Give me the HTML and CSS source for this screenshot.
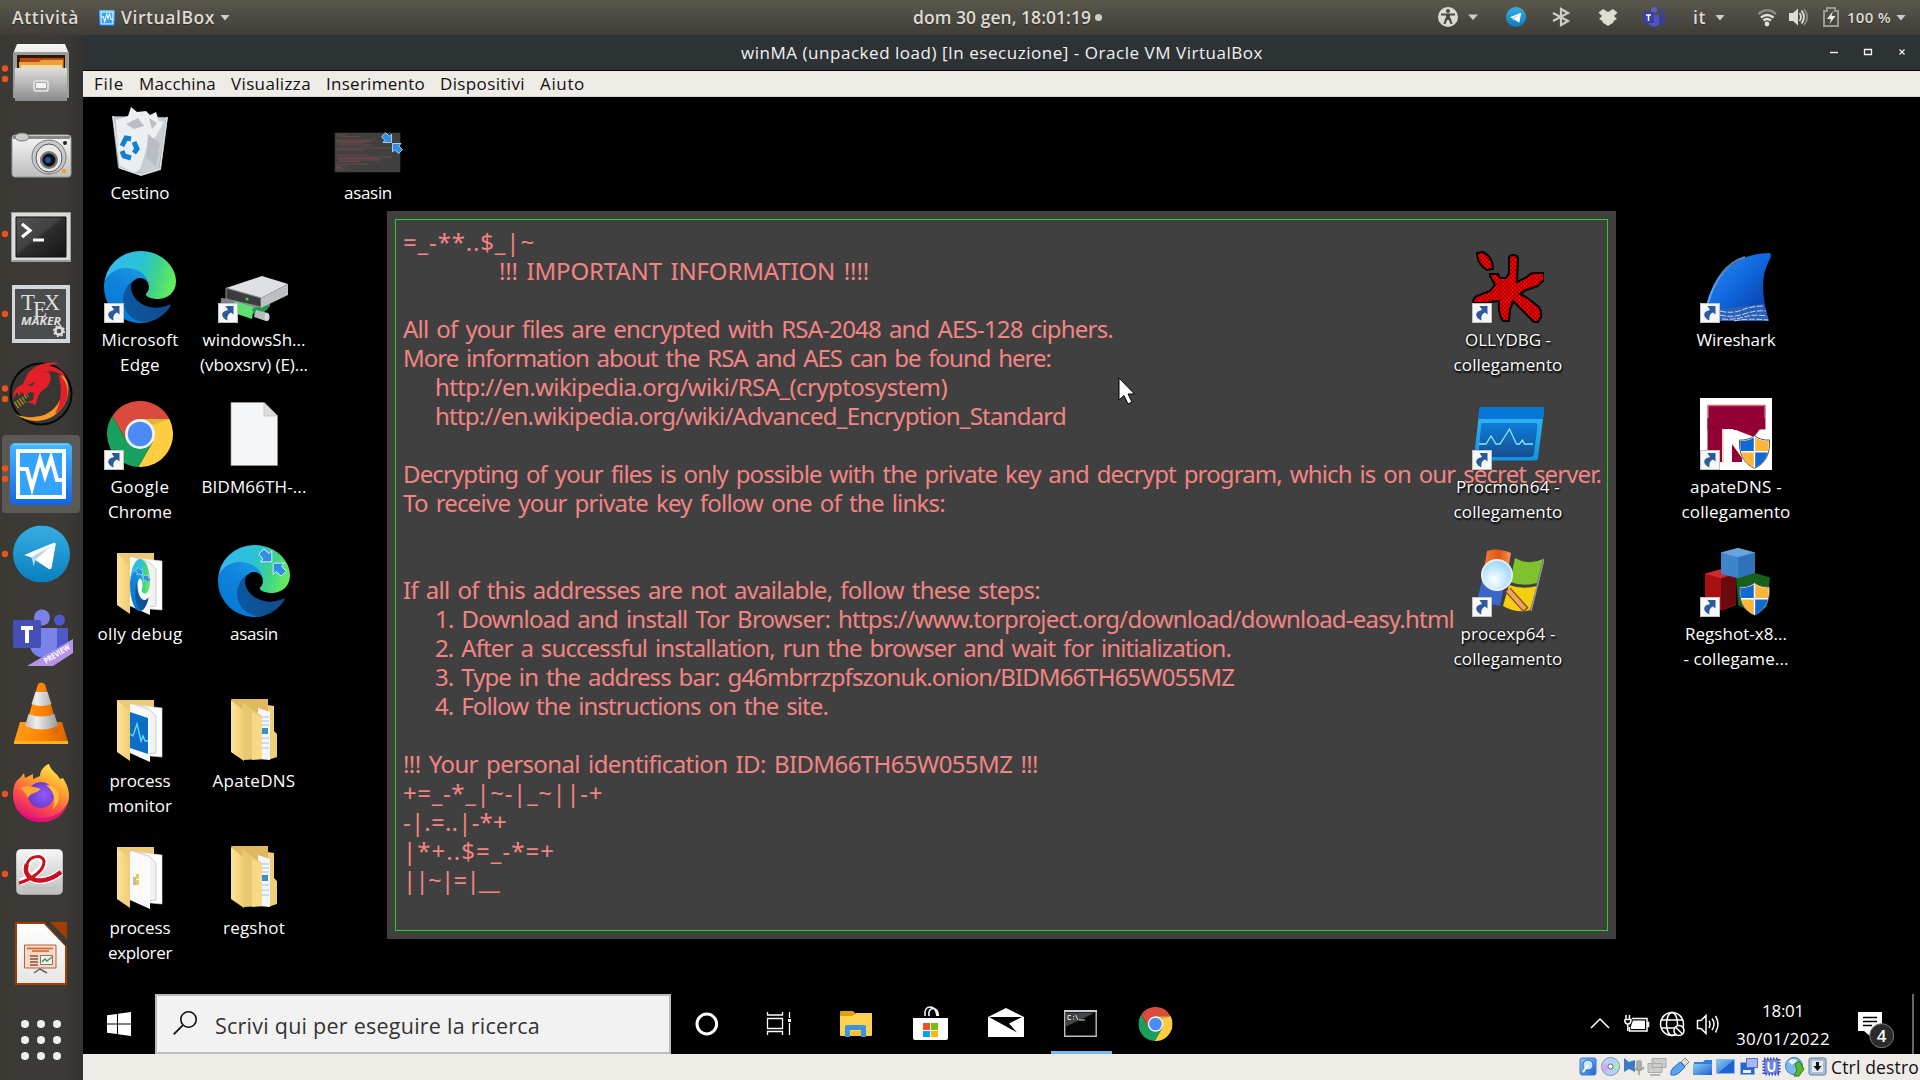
FILE: index.html
```html
<!DOCTYPE html>
<html lang="it">
<head>
<meta charset="utf-8">
<title>winMA (unpacked load) [In esecuzione] - Oracle VM VirtualBox</title>
<link rel="stylesheet" href="styles.css">
</head>
<body>
<svg class="defs" aria-hidden="true">
  <defs>
    <linearGradient id="edgeDark" x1="0" x2="1" y1="0" y2="0"><stop offset="0" stop-color="#0c59a4"/><stop offset="1" stop-color="#114a8b"/></linearGradient>
    <linearGradient id="edgeMid" x1=".8" x2=".2" y1="0" y2="1"><stop offset="0" stop-color="#1b9de2"/><stop offset=".4" stop-color="#1184dc"/><stop offset="1" stop-color="#0078d4"/></linearGradient>
    <linearGradient id="edgeTop" x1="0" x2="1" y1=".3" y2=".5"><stop offset="0" stop-color="#35b8f6"/><stop offset=".5" stop-color="#2bc3d2"/><stop offset=".75" stop-color="#40d489"/><stop offset="1" stop-color="#66eb5c"/></linearGradient>
    <linearGradient id="tg" x1="0" x2="0" y1="0" y2="1"><stop offset="0" stop-color="#37aee2"/><stop offset="1" stop-color="#087fbe"/></linearGradient>
    <linearGradient id="grey" x1="0" x2="0" y1="0" y2="1"><stop offset="0" stop-color="#dedede"/><stop offset="1" stop-color="#8b8b8b"/></linearGradient>
    <linearGradient id="silver" x1="0" x2="0" y1="0" y2="1"><stop offset="0" stop-color="#f7f7f7"/><stop offset="1" stop-color="#bdbdbd"/></linearGradient>
    <linearGradient id="term" x1="0" x2="1" y1="0" y2="1"><stop offset="0" stop-color="#555"/><stop offset=".45" stop-color="#414141"/><stop offset=".5" stop-color="#2d2d2d"/><stop offset="1" stop-color="#151515"/></linearGradient>
    <linearGradient id="vb" x1="0" x2="0" y1="0" y2="1"><stop offset="0" stop-color="#45b9ff"/><stop offset="1" stop-color="#1565e0"/></linearGradient>
    <linearGradient id="fold" x1="0" x2="1" y1="0" y2="0"><stop offset="0" stop-color="#fde39a"/><stop offset="1" stop-color="#f0cc72"/></linearGradient>
    <linearGradient id="cone" x1="0" x2="1" y1="0" y2="0"><stop offset="0" stop-color="#ff9c1a"/><stop offset=".5" stop-color="#ff8300"/><stop offset="1" stop-color="#d96400"/></linearGradient>
    <linearGradient id="coneW" x1="0" x2="1" y1="0" y2="0"><stop offset="0" stop-color="#bbb"/><stop offset=".35" stop-color="#eee"/><stop offset="1" stop-color="#999"/></linearGradient>
    <linearGradient id="ffx" x1=".8" x2=".3" y1="0" y2="1"><stop offset="0" stop-color="#fff44f"/><stop offset=".35" stop-color="#ffa32e"/><stop offset=".65" stop-color="#ff5447"/><stop offset="1" stop-color="#e00b7c"/></linearGradient>
    <radialGradient id="ffp" cx=".6" cy=".5" r=".6"><stop offset="0" stop-color="#9059ff"/><stop offset="1" stop-color="#6a38c8"/></radialGradient>
    <linearGradient id="fin" x1="0" x2="1" y1="0" y2="1"><stop offset="0" stop-color="#2f8df2"/><stop offset=".5" stop-color="#0f66dd"/><stop offset="1" stop-color="#0a2f9a"/></linearGradient>
    <linearGradient id="pmScreen" x1="0" x2="0" y1="0" y2="1"><stop offset="0" stop-color="#0f7ddb"/><stop offset="1" stop-color="#174f90"/></linearGradient>
    <linearGradient id="pmBody" x1="0" x2="0" y1="0" y2="1"><stop offset="0" stop-color="#35baf0"/><stop offset="1" stop-color="#1193e6"/></linearGradient>
    <radialGradient id="lens" cx=".4" cy=".65" r=".7"><stop offset="0" stop-color="#fff"/><stop offset="1" stop-color="#8fd3fa"/></radialGradient>
    <linearGradient id="flagRed" x1="0" x2="1" y1="0" y2="0"><stop offset="0" stop-color="#f5823a"/><stop offset=".6" stop-color="#de5512"/><stop offset="1" stop-color="#f29a5e"/></linearGradient>
    <linearGradient id="impr" x1="0" x2="0" y1="0" y2="1"><stop offset="0" stop-color="#fff"/><stop offset="1" stop-color="#e6e6e6"/></linearGradient>
    <linearGradient id="blueBox" x1="0" x2="1" y1="0" y2="1"><stop offset="0" stop-color="#8cc9f7"/><stop offset="1" stop-color="#1b62cf"/></linearGradient>
    <pattern id="check" width="4" height="4" patternUnits="userSpaceOnUse"><rect width="4" height="4" fill="#f40000"/><path d="M0 0h2v2H0zM2 2h2v2H2z" fill="#a80000"/></pattern>

    <symbol id="edge" viewBox="0 0 256 256"><g transform="translate(-4.63 -4.92)">
      <path fill="url(#edgeDark)" d="M235.68 195.46a93.73 93.73 0 0 1-10.54 4.71 101.87 101.87 0 0 1-35.9 6.46c-47.32 0-88.54-32.55-88.54-74.32A31.48 31.48 0 0 1 117.13 105c-42.8 1.8-53.8 46.4-53.8 72.53 0 73.88 68.09 81.37 82.76 81.37 7.91 0 19.84-2.3 27-4.56l1.31-.44a128.34 128.34 0 0 0 66.6-52.8 4 4 0 0 0-5.32-5.64z"/>
      <path fill="url(#edgeMid)" d="M110.34 246.34A79.2 79.2 0 0 1 87.6 225a80.72 80.72 0 0 1 29.53-120c3.12-1.47 8.45-4.13 15.54-4a32.35 32.35 0 0 1 25.69 13 31.88 31.88 0 0 1 6.36 18.66c0-.21 24.46-79.6-80-79.6-43.9 0-80 41.66-80 78.21a130.15 130.15 0 0 0 12.11 56 128 128 0 0 0 156.38 67.11 75.55 75.55 0 0 1-62.78-8z"/>
      <path fill="url(#edgeTop)" d="M156.94 153.78c-.81 1.05-3.3 2.5-3.3 5.66 0 2.61 1.7 5.12 4.72 7.23 14.38 10 41.49 8.68 41.56 8.68a59.56 59.56 0 0 0 30.27-8.35 61.38 61.38 0 0 0 30.43-52.88c.26-22.41-8-37.31-11.34-43.91C228.09 28.76 182.35 4.92 132.61 4.92a128 128 0 0 0-128 126.2c.48-36.54 36.8-66.05 80-66.05 3.5 0 23.46.34 42 10.07 16.34 8.58 24.9 18.94 30.85 29.21 6.18 10.67 7.28 24.15 7.28 29.52s-2.74 13.33-7.8 19.91z"/></g>
    </symbol>
    <symbol id="chrome" viewBox="3 3 66 66">
      <path fill="#db4a3e" d="M65.4 21A33 33 0 0 0 8.3 18L23 43.5 36 36V21z"/>
      <path fill="#ffcd42" transform="rotate(120 36 36)" d="M65.4 21A33 33 0 0 0 8.3 18L23 43.5 36 36V21z"/>
      <path fill="#17a05e" transform="rotate(240 36 36)" d="M65.4 21A33 33 0 0 0 8.3 18L23 43.5 36 36V21z"/>
      <path fill="#000" opacity=".12" d="M36 21h29.4L48 27z"/>
      <circle cx="36" cy="36" r="15" fill="#f1f1f1"/><circle cx="36" cy="36" r="12.2" fill="#4b8bf5"/>
    </symbol>
    <symbol id="shortcut" viewBox="0 0 20 20">
      <path fill="#c2c2c2" d="M0 0h20v20H0z"/><path fill="#f7f7f7" d="M1 1h18v18H1z"/>
      <path fill="#2c5a9c" d="M7.500 3H15.500V11.500L13 9.500C10 11 9 13 9.500 17.500 5 15.500 3 12 5 9.500 6 8 8 7.500 10 7z"/>
    </symbol>
    <symbol id="sync" viewBox="0 0 29 29">
      <path fill="#2f8fe6" stroke="#d6eafc" stroke-width="1" d="M6 1l5 4.500L13.800 3v10.800H2.500L5 11 .8 6zM15.200 15.200h11.300l-3 3 4.700 5-5 5-5-4.700-3 3z"/>
    </symbol>
    <symbol id="shield" viewBox="0 0 32 34">
      <path fill="#fff" stroke="#555" d="M16 .7C12 4 6 5.500 1 5c-.5 13 3 23 15 28.300C28 28 31.500 18 31 5 26 5.500 20 4 16 .7z"/>
      <path fill="#0f6bd0" d="M15.300 2.500V16H2.400C1.800 13 1.700 9 1.800 6c5 .3 9.500-1 13.500-3.500zM16.700 17.400h12.500C27 25 23 29.500 16.700 32.500z"/>
      <path fill="#fdb53a" d="M16.700 2.500V16h12.900c.6-3 .7-7 .6-10-5 .3-9.500-1-13.500-3.500zM15.300 17.400H2.800C5 25 9 29.500 15.300 32.500z"/>
    </symbol>
    <symbol id="folderOpen" viewBox="0 0 72 72">
      <path fill="#eecb72" d="M13 8h37v52H13z"/><path fill="#fff" stroke="#ddd" stroke-width=".6" d="M32 13l26 3v49l-22-2z"/>
      <path fill="#f2f2f2" stroke="#bbb" stroke-width=".7" d="M27 11l18 6 7 7v37l-18 2z"/><path fill="#fafafa" d="M26 12l20 8v50L26 61z"/>
    </symbol>
    <symbol id="folderFront" viewBox="0 0 72 72"><path fill="url(#fold)" d="M13 8l13 12v49L13 60z"/></symbol>
    <symbol id="folderFull" viewBox="0 0 72 72">
      <path fill="#e0b95e" d="M13 7h37v6l6 1v52l-20-4z"/><path fill="#efce7c" d="M50 14h6v25l3 3v23l-9 3z"/>
      <path fill="#f4f7f9" d="M40 16l12 4v48l-12-1z"/><path stroke="#9fc3dc" d="M43 25h8M43 29h8M43 33h8M43 46h8M43 51h8M43 56h8"/><path fill="#3a8ec8" d="M43 36h7v6h-7z"/>
      <path fill="#e9c873" d="M24 10l20 14v43l-18 1z"/><path fill="#f7d988" d="M34 20l10 5v42l-10 1z"/><path fill="url(#fold)" d="M13 8l13 11v50L13 60z"/>
    </symbol>
    <symbol id="plane" viewBox="0 0 56 56"><circle cx="28" cy="28" r="28" fill="url(#tg)"/><path fill="#fff" d="M11 29l29-12c1.500-.5 2.200.2 1.900 2L38 41c-.4 2-1.700 2.300-3.200 1.400L18 31.500z"/><path fill="#b5d7ea" d="M18 31l18-10-14 13-1.500 6z"/></symbol>
    <symbol id="pulse" viewBox="0 0 62 62"><rect width="62" height="62" rx="5" fill="url(#vb)"/><path fill="none" stroke="#62d0ff" stroke-width="1.500" d="M4 1.500h54"/><path fill="#34a3ff" stroke="#fff" stroke-width="4" d="M8 8h46v46H8z"/><path fill="none" stroke="#fff" stroke-width="4" d="M9 26h8l5 19 8-29 5 17 6-18 6 22h8"/></symbol>
  </defs>
</svg>

<header class="topbar">
  <span class="top-text activities" data-w="67">Attività</span>
  <svg class="top-app" viewBox="0 0 62 62"><use href="#pulse"/></svg>
  <span class="top-text appname" data-w="94">VirtualBox</span>
  <i class="caret"></i>
  <div class="clock"><span class="top-text" data-w="178">dom 30 gen, 18:01:19</span><i class="dot"></i></div>
  <svg class="indicators" viewBox="1430 0 260 35">
    <circle cx="1448" cy="17" r="10" fill="#dcdad5"/><g fill="none" stroke="#4d4a43" stroke-width="2.200"><path d="M1441 14.500h14M1448 14v5M1446.500 18l-2 6M1449.500 18l2 6"/></g><circle cx="1448" cy="11" r="2" fill="#4d4a43"/><path fill="#4d4a43" d="M1446 14h4v6h-4z"/>
    <path fill="#cfcdc8" d="M1468 14.500h10l-5 5.500z"/>
    <use href="#plane" x="1506" y="7" width="20" height="20"/>
    <path fill="none" stroke="#cfcdc6" stroke-width="2.200" d="M1553 13l15 8-7 4V9l7 4-15 8"/>
    <path fill="#dfdcd3" d="M1603 9l5 3 5-3 4.500 3.500-3.500 3.500 3 3-3.500 2v1.500l-5.500 3.500-5.500-3.500V21l-3.500-2 3-3-3.500-3.500z"/>
    <circle cx="1654" cy="10" r="3" fill="#5b5fc7"/><circle cx="1661.500" cy="11.500" r="2.300" fill="#3f43a6"/><path fill="#3b3e9c" d="M1657 15h8v7c0 2-5 4-8 2z"/><path fill="#5055bd" d="M1648 15h11v8c-1 5-9 5-11 0z"/><path fill="#3b3fae" d="M1643 12h11v11h-11z"/><path stroke="#fff" stroke-width="1.500" d="M1646 15h5M1648.500 15v6"/>
  </svg>
  <span class="top-text lang" data-w="13">it</span><i class="caret"></i>
  <svg class="sysicons" viewBox="1752 0 92 35">
    <g fill="none" stroke="#e3e1dc" stroke-width="2.400"><path stroke="#8b8982" d="M1758.500 14q9-7.500 17.500 0"/><path d="M1761 17.500q6-5 12.500 0M1763.500 20.500q3.500-3 7.500 0"/></g><circle cx="1767" cy="24" r="2.400" fill="#e3e1dc"/>
    <path fill="#dedcd7" d="M1789 13h4l5-4.500v17l-5-4.500h-4z"/><g fill="none" stroke="#dedcd7" stroke-width="1.800"><path d="M1799.500 13q3 4 0 8M1801.500 10.500q5 6.500 0 13"/><path stroke="#8b8982" d="M1804 9q6.500 8 0 16"/></g>
    <path fill="none" stroke="#9a9891" stroke-width="2" d="M1824 11h3V8h8v3h3v15h-14z"/><path fill="#eee" d="M1833 11l-6 8h4l-1.500 5 6-8h-4z"/>
  </svg>
  <span class="top-text pct" data-w="44">100 %</span><i class="caret"></i>
</header>

<main class="shell">
  <nav class="dock">
    <svg viewBox="0 0 83 80"><g fill="#e95420"><circle cx="5" cy="34.500" r="3.200"/><circle cx="5" cy="45" r="3.200"/></g>
      <path fill="url(#silver)" d="M17 10h48l4 10v44H13V20z"/><path fill="#9c9c9c" d="M13 18h56v46H13z"/><path fill="#2b1a10" d="M17 21h48v14H17z"/><path fill="#b44a12" d="M20 24h44v11H20z"/><path fill="#e9a13b" d="M19 28h20l2-2h22v10H19z"/><path fill="#f6dba0" d="M21 31h41v4H21z"/><path fill="url(#grey)" d="M15 34h52v33H15z"/><rect x="34" y="47" width="14" height="10" rx="2" fill="#aaa" stroke="#e8e8e8" stroke-width="1.500"/><path fill="#f2f2f2" d="M36 49h10v5H36z"/></svg>
    <svg viewBox="0 0 83 80"><rect x="12" y="21" width="59" height="42" rx="3" fill="url(#silver)" stroke="#999"/><path fill="#8a8a8a" d="M13 22h57v3H13z"/><ellipse cx="22" cy="23" rx="7" ry="4" fill="#ccc" stroke="#777"/><circle cx="65" cy="29" r="2" fill="#222"/><ellipse cx="49" cy="43" rx="17" ry="17" fill="#c9c9c9" stroke="#777"/><ellipse cx="49" cy="44" rx="13" ry="14" fill="#eaeaea" stroke="#555"/><ellipse cx="49" cy="46" rx="9" ry="9" fill="#777"/><circle cx="49" cy="46" r="6.500" fill="#111"/><circle cx="48" cy="46" r="3" fill="#1b54a8"/><path fill="#f0a020" d="M62 55h4v4h-4z"/></svg>
    <svg viewBox="0 0 83 80"><circle cx="5" cy="40" r="3.200" fill="#e95420"/><path fill="#9b9b9b" d="M11 18h60v50H11z"/><path fill="#dcdcdc" d="M12 19h58v47H12z"/><path fill="url(#term)" stroke="#111" d="M16 23h50v40H16z"/><path fill="none" stroke="#fff" stroke-width="3.200" d="M22 30l8 6.500-8 6.500M33 46h11"/></svg>
    <svg viewBox="0 0 83 80"><circle cx="5" cy="40" r="3.200" fill="#e95420"/><path fill="#d3d7d9" d="M12 11h58v58H12z"/><path fill="#4a4c4d" d="M15 15h51v50H15z"/><g fill="#dedede"><text x="21" y="36" font-family="Liberation Serif" font-size="24" textLength="14" lengthAdjust="spacingAndGlyphs">T</text><text x="33" y="43" font-family="Liberation Serif" font-size="24" textLength="14" lengthAdjust="spacingAndGlyphs">E</text><text x="44" y="36" font-family="Liberation Serif" font-size="24" textLength="16" lengthAdjust="spacingAndGlyphs">X</text><text x="21" y="51" font-family="Open Sans" font-weight="700" font-style="italic" font-size="11" textLength="40" lengthAdjust="spacingAndGlyphs">MAKER</text></g><circle cx="59" cy="57" r="3.600" fill="none" stroke="#ddd" stroke-width="2.500"/><circle cx="59" cy="57" r="5" fill="none" stroke="#ddd" stroke-width="2" stroke-dasharray="2 1.900"/></svg>
    <svg viewBox="0 0 83 80"><g fill="#e95420"><circle cx="5" cy="34.500" r="3.200"/><circle cx="5" cy="45" r="3.200"/></g><circle cx="41" cy="40" r="30.500" fill="#383632" stroke="#080808" stroke-width="2"/><path fill="#f79a26" d="M15 60c20 14 44 6 52-15 4-14-1-22-6-25 5 20-2 35-17 41-10 3-20 3-29-1z"/><path fill="#e3202a" d="M58 20c8 5 11 14 9 24-3 10-9 14-12 16 6-12 8-26 3-40z"/><path fill="#e3202a" d="M13 45c0-11 5-12 10-15l5-11c8-8 18-12 31-10-4 1-8 2-10 3 9 1 15 6 17 12-7-6-12-7-17-6 4 7 0 15-6 18-4 3-6 8-7 15l-9-3 6-2 1-7c-4-2-7 0-9 3l-3-4-3 4-2-4z"/><path fill="#383632" d="M27 31l8-3-3 4zM40 19q10-4 16 0-8-3-16 0z"/><path fill="none" stroke="#9c8b22" stroke-width="4" stroke-dasharray="1.500 1.500" d="M15 50l13-9M17 53l8-6"/></svg>
    <svg viewBox="0 0 83 80"><rect x="2" y="1" width="78" height="78" rx="4" fill="#5b5956"/><g fill="#e95420"><circle cx="5" cy="34.500" r="3.200"/><circle cx="5" cy="45" r="3.200"/></g><use href="#pulse" x="10" y="9" width="62" height="62"/></svg>
    <svg viewBox="0 0 83 80"><circle cx="5" cy="40" r="3.200" fill="#e95420"/><use href="#plane" x="13" y="11.500" width="57" height="57"/></svg>
    <svg viewBox="0 0 83 80"><circle cx="42" cy="23.500" r="8" fill="#7b83eb"/><circle cx="59.500" cy="26" r="5.500" fill="#5059c9"/><path fill="#5059c9" d="M54 34h14v15c0 9-9 12-14 8z"/><path fill="#7b83eb" d="M30 34h27v16c0 18-27 18-27 0z"/><rect x="13" y="26" width="28" height="28" rx="2" fill="#464eb8"/><path fill="none" stroke="#fff" stroke-width="4" d="M21 34h12M27 34v15"/><path fill="#b593e8" d="M27 72l46-27v14L53 72z"/><text class="preview" transform="translate(46 70) rotate(-32)" textLength="29" lengthAdjust="spacingAndGlyphs">PREVIEW</text></svg>
    <svg viewBox="0 0 83 80"><path fill="url(#cone)" d="M20 48h42l6 20q0 2-2 2H16q-2 0-2-2z"/><path fill="#ffb02a" d="M14 67h54v3H14z"/><path fill="url(#cone)" d="M38 10q3-3 7 0l14 48c-4 6-31 6-35 0z"/><path fill="url(#coneW)" d="M35.500 18h12l4 12q-10 4-20 0zM28.500 40q13 5 26 0l3.500 12q-16 7-33 0z"/></svg>
    <svg viewBox="0 0 83 80"><circle cx="5" cy="40" r="3.200" fill="#e95420"/><path fill="url(#ffx)" d="M40 22c0-6 5-11 9-12 2 7 8 9 11 15l3-1c6 9 8 19 4 27-4 11-15 17-26 17-17 0-28-13-28-27 0-8 2-14 7-17l4-5 1 5 8-4v5z"/><path fill="#e00b7c" d="M14 49c5 13 17 15 27 15 13 0 22-6 27-16-3 12-13 20-27 20-13 0-24-8-27-19z" opacity=".8"/><circle cx="41" cy="41" r="13" fill="url(#ffp)"/><path fill="#ffa530" d="M20 34c6-3 13-2 21 1-5 5-10 3-13 9-2-3-3-6-8-10z"/><path fill="#ffbd3a" d="M46 31c13 0 18 15 6 25 4-8 4-17-6-25z"/></svg>
    <svg viewBox="0 0 83 80"><circle cx="5" cy="40" r="3.200" fill="#e95420"/><rect x="16" y="15" width="47" height="46" rx="5" fill="url(#silver)" stroke="#222" stroke-opacity=".3"/><path fill="none" stroke="#fff" stroke-width="7" d="M20 48c12-4 24-13 24-20 0-8-14-7-17 2-6 15 14 24 34 8"/><path fill="none" stroke="#c9101c" stroke-width="3" d="M19 49c14-4 25-13 25-21 0-8-14-7-17 2"/><path fill="none" stroke="#c9101c" stroke-width="4.500" d="M27 30c-6 15 14 24 34 8"/><path stroke="#bbb" d="M23 54h33"/></svg>
    <svg viewBox="0 0 83 80"><path fill="#a33e03" d="M15 8h52v63H15z"/><path fill="#3c3b37" d="M44 8h6l17 17v8z"/><path fill="url(#impr)" d="M17 10h27l21 22v37H17z"/><path fill="#f6d9c8" stroke="#b5623a" d="M24.500 31h31.500v23H24.500z"/><path stroke="#d25a22" stroke-width="1.500" d="M27 34.500h26M32 37h17"/><path stroke="#8c5336" stroke-width="1.500" d="M30 42h8M30 45h8M30 48h8M30 51h8"/><path fill="#f3f3f3" stroke="#777" d="M40.500 41.500h12v9h-12z"/><path fill="none" stroke="#3f9b3c" stroke-width="1.500" d="M42 48l3-3 2 2 5-4"/><path fill="none" stroke="#666" stroke-width="1.500" d="M34 59l6-4 7 4M40 54v2"/></svg>
    <svg class="apps" viewBox="0 994 83 86"><g fill="#eeeeec"><circle cx="25" cy="1024" r="4"/><circle cx="41" cy="1024" r="4"/><circle cx="57" cy="1024" r="4"/><circle cx="25" cy="1040" r="4"/><circle cx="41" cy="1040" r="4"/><circle cx="57" cy="1040" r="4"/><circle cx="25" cy="1056" r="4"/><circle cx="41" cy="1056" r="4"/><circle cx="57" cy="1056" r="4"/></g></svg>
  </nav>

  <section class="window">
    <div class="titlebar">
      <span class="title" data-w="522">winMA (unpacked load) [In esecuzione] - Oracle VM VirtualBox</span>
      <svg class="controls" viewBox="1820 35 100 35"><g fill="none" stroke="#f4f4f4"><path d="M1830 52.500h8" stroke-width="1.400"/><path d="M1864.500 49.500h7v5h-7z" stroke-width="1.300"/><path d="M1899.500 49.500l5 5M1904.500 49.500l-5 5" stroke-width="1.200"/></g></svg>
    </div>
    <div class="menubar">
      <span data-w="30">File</span><span data-w="77">Macchina</span><span data-w="80">Visualizza</span><span data-w="99">Inserimento</span><span data-w="85">Dispositivi</span><span data-w="45">Aiuto</span>
    </div>

    <div class="desktop">
      <div class="note">
        <div class="note-text">
          <p><span data-w="132">=_-**..$_|~</span></p>
          <p class="in2"><span data-w="370">!!! IMPORTANT INFORMATION !!!!</span></p>
          <p></p>
          <p><span data-w="710">All of your files are encrypted with RSA-2048 and AES-128 ciphers.</span></p>
          <p><span data-w="648">More information about the RSA and AES can be found here:</span></p>
          <p class="in1"><span data-w="512">http://en.wikipedia.org/wiki/RSA_(cryptosystem)</span></p>
          <p class="in1"><span data-w="631">http://en.wikipedia.org/wiki/Advanced_Encryption_Standard</span></p>
          <p></p>
          <p><span data-w="1198">Decrypting of your files is only possible with the private key and decrypt program, which is on our secret server.</span></p>
          <p><span data-w="542">To receive your private key follow one of the links:</span></p>
          <p></p>
          <p></p>
          <p><span data-w="637">If all of this addresses are not available, follow these steps:</span></p>
          <p class="in1"><span data-w="1019">1. Download and install Tor Browser: https://www.torproject.org/download/download-easy.html</span></p>
          <p class="in1"><span data-w="796">2. After a successful installation, run the browser and wait for initialization.</span></p>
          <p class="in1"><span data-w="799">3. Type in the address bar: g46mbrrzpfszonuk.onion/BIDM66TH65W055MZ</span></p>
          <p class="in1"><span data-w="393">4. Follow the instructions on the site.</span></p>
          <p></p>
          <p><span data-w="635">!!! Your personal identification ID: BIDM66TH65W055MZ !!!</span></p>
          <p><span data-w="200">+=_-*_|~-|_~||-+</span></p>
          <p><span data-w="104">-|.=..|-*+</span></p>
          <p><span data-w="152">|*+..$=_-*=+</span></p>
          <p><span data-w="96">||~|=|__</span></p>
        </div>
      </div>

      <div class="icons">
        <figure class="c1 r1"><svg viewBox="0 0 72 72"><path fill="#8c9298" d="M8 12l56 1-7 53-20 6-23-8z"/><path fill="#c9ced3" d="M10 13l52 1-7 51-18 5-21-7z"/><path fill="#eceff1" d="M12 16l12-4 3-9 6 5 9-1 4 4 6-3 3 9 5 1-8 14-8 8-8 25-6 4-15-8z"/><path fill="#b8bec4" d="M44 30l12 10-4 22-10-8zM22 20l12-6 6 8-10 3zM45 14l8 5-5 6z"/><path fill="none" stroke="#dfe3e6" stroke-width="1.500" d="M9 12l7 52 21 7 19-6 7-52"/><g fill="none" stroke="#1180d2" stroke-width="5"><path d="M18 42l4-8 5 1M30 38l3 7-3 4M27 54l-7-2-2-5"/></g></svg><figcaption><span data-w="59">Cestino</span></figcaption></figure>
        <figure class="c3 r1"><svg viewBox="0 0 72 72"><path fill="#404040" stroke="#344c34" stroke-width=".6" d="M3 29h65v39H3z"/><g stroke="#a04e4e" stroke-width=".8" opacity=".6"><path d="M4 31h10M8 32.500h20M4 36h38M4 37.500h35M6 39h27M6 41h34M4 44h62M4 46h29M4 51h33M6 53h54M6 54.500h42M6 56h42M6 57.500h22M4 60h33M4 62h12M4 63.500h6M4 65h9"/></g><use href="#sync" x="49" y="28" width="22" height="22"/></svg><figcaption><span data-w="48">asasin</span></figcaption></figure>

        <figure class="c1 r2"><svg viewBox="0 0 72 72"><use href="#edge" width="72" height="72"/><use href="#shortcut" y="52" width="20" height="20"/></svg><figcaption><span data-w="77">Microsoft</span><span data-w="40">Edge</span></figcaption></figure>
        <figure class="c2 r2"><svg viewBox="0 0 72 72"><path fill="#7e8386" d="M3 47l9 1 40 3v4l-8 8L2 60z"/><path fill="#5ee070" d="M16 50l20 6-2 12-18-6z"/><path fill="#1e9a4a" d="M34 58l18-6-3 7-12 6z"/><path fill="#b8bcbe" d="M38 59l12 3-2 8-12-4z"/><ellipse cx="49" cy="66" rx="2.500" ry="4" fill="#d5d7d8"/><path fill="#dfe0e3" d="M8 37l36-12 26 8-27 14z"/><path fill="#3a3c3f" stroke="#909090" d="M8 37l35 10v9L8 48z"/><path fill="#bdbfc3" d="M43 47l27-14v11L43 57z"/><circle cx="29" cy="48" r="1.600" fill="#2be02b"/><use href="#shortcut" y="52" width="20" height="20"/></svg><figcaption><span data-w="103">windowsSh...</span><span data-w="108">(vboxsrv) (E)...</span></figcaption></figure>
        <figure class="c13 r2"><svg viewBox="0 0 72 72"><g fill="url(#check)" stroke="#000" stroke-width="2"><path d="M5 2l6-1q10 5 10 17l-6 1Q5 13 5 2z"/><path d="M18 23h8l2 4h6l3-5V7q0-3 4-3 5 0 5 4l-1 23 10-5q3-4 8-4h9v7l-6 6-12 4-6 4 6 3 13 10q3 5 2 10l-3 5q-5 1-7-3L49 58l-8-8-3 9-1 11h-6q-5-6-4-20-6 0-12 2H1q0-5 4-7l13-5 5-6-5-9z"/></g><use href="#shortcut" y="52" width="20" height="20"/></svg><figcaption><span data-w="86">OLLYDBG -</span><span data-w="109">collegamento</span></figcaption></figure>
        <figure class="c15 r2"><svg viewBox="0 0 72 72"><path fill="url(#fin)" d="M5 60C10 30 32 2 70 2q2 2 0 6C60 26 62 44 69 70H20z"/><path fill="none" stroke="#7db8f7" stroke-width="2" opacity=".7" d="M8 52C14 30 26 12 45 6"/><path fill="#2b62b8" d="M20 58l44-5 5 17H20z"/><g fill="none" stroke="#c4d9f2"><path d="M20 60q12 3 22-1t22-4M20 64q12 3 24-1t22-3M22 68q12 1 22-2t23-1M34 70q12-3 34-1" stroke-dasharray="6 1.500"/></g><use href="#shortcut" y="52" width="20" height="20"/></svg><figcaption><span data-w="79">Wireshark</span></figcaption></figure>

        <figure class="c1 r3"><svg viewBox="0 0 72 72"><use href="#chrome" x="3" y="3" width="66" height="66"/><use href="#shortcut" y="52" width="20" height="20"/></svg><figcaption><span data-w="59">Google</span><span data-w="64">Chrome</span></figcaption></figure>
        <figure class="c2 r3"><svg viewBox="0 0 72 72"><path fill="#f5f6f7" stroke="#999" stroke-width=".7" d="M13 4.500h33l13.500 13.500v49.500H13z"/><path fill="#dcdcdc" stroke="#bbb" stroke-width=".7" d="M46 4.500V18h13.500z"/></svg><figcaption><span data-w="105">BIDM66TH-...</span></figcaption></figure>
        <figure class="c13 r3"><svg viewBox="0 0 72 72"><path fill="url(#pmBody)" d="M10 9h60q2.500 0 2.200 2.500L66 60q-.3 2.500-3 2.500H4Q1.500 62.500 2 60L7.500 11Q8 9 10 9z"/><path fill="#0877d5" d="M10 9h60q2.500 0 2.200 2.500L71 21H6.500L7.500 11Q8 9 10 9z"/><path fill="url(#pmScreen)" d="M11 25h52q3 0 2.500 3L62 55q-.5 4-4 4H9q-3 0-2.500-4L9 28q0-3 2-3z"/><path fill="none" stroke="#7eeafc" stroke-width="1.300" d="M7 46h7l5-8 5 8h4L37.500 31l7 15h3l3-4 2 4H61"/><use href="#shortcut" y="52" width="20" height="20"/></svg><figcaption><span data-w="104">Procmon64 -</span><span data-w="109">collegamento</span></figcaption></figure>
        <figure class="c15 r3"><svg viewBox="0 0 72 72"><path fill="#fff" d="M0 0h72v72H0z"/><path fill="#930035" stroke="#c96a72" stroke-width="1.500" d="M8 7.500h57V31H8z"/><path fill="#930035" d="M7.500 20H65v11H60l-6 8L36 32H24v32H7.500z"/><path fill="#f3d8c9" d="M22 31h2v34h-2z"/><path fill="#fff" d="M24 31h9l8 12v22H24z"/><path fill="#930035" d="M32 46l10 14v4H32z"/><use href="#shield" x="38.500" y="37" width="32" height="34"/><use href="#shortcut" y="52" width="20" height="20"/></svg><figcaption><span data-w="92">apateDNS -</span><span data-w="109">collegamento</span></figcaption></figure>

        <figure class="c1 r4"><svg viewBox="0 0 72 72"><use href="#folderOpen" width="72" height="72"/><svg x="26" y="14" width="20" height="52" viewBox="0 0 256 256" preserveAspectRatio="none"><use href="#edge" width="256" height="256"/></svg><use href="#sync" x="31" y="18" width="16" height="24"/><use href="#folderFront" width="72" height="72"/></svg><figcaption><span data-w="85">olly debug</span></figcaption></figure>
        <figure class="c2 r4"><svg viewBox="0 0 72 72"><use href="#edge" width="72" height="72"/><use href="#sync" x="40" y="3" width="29" height="29"/></svg><figcaption><span data-w="48">asasin</span></figcaption></figure>
        <figure class="c13 r4"><svg viewBox="0 0 72 72"><g transform="translate(0 4)"><path fill="url(#flagRed)" d="M15 2q10-4 24 2l-5 28q-12-5-24 0z"/><path fill="#7fc22e" d="M43 9q14 8 28 1l-6 24q-13 4-27-1z"/><path fill="#3b66cc" d="M10 32q12-5 23 1l-5 24Q14 53 4 56z"/><path fill="#f5ce10" d="M37 36q14 5 28 1l-7 24q-13 4-27-4z"/><path stroke="#999" fill="none" stroke-width="1.500" d="M72 10l-13 52"/><path stroke="#7b4a20" stroke-width="7" d="M36 41l18 20"/><path stroke="#f2a45c" stroke-width="4.500" d="M36 41l17 19"/><circle cx="25" cy="26" r="15" fill="url(#lens)" stroke="#e7eef3" stroke-width="2"/></g><use href="#shortcut" y="52" width="20" height="20"/></svg><figcaption><span data-w="95">procexp64 -</span><span data-w="109">collegamento</span></figcaption></figure>
        <figure class="c15 r4"><svg viewBox="0 0 72 72"><g transform="translate(0 3) scale(1 .92)"><path fill="#17601b" d="M36 32l18-5 16 5-3 32-17 5-12-7z"/><path fill="#a81014" d="M5 28l16-5 15 5v34l-14 6L5 60z"/><path fill="#cc2b2f" d="M5 28l16-5 15 5-15 5z"/><path fill="#6b0a0c" d="M21 33l15-5v33l-15 7z"/><path fill="#3d86cc" d="M21 5l17-5 17 5v22l-17 6-17-5z"/><path fill="#68a5dc" d="M21 5l17-5 17 5-17 5z"/><path fill="#2f72b8" d="M38 10l17-5v22l-17 6z"/></g><use href="#shield" x="38.500" y="37" width="32" height="34"/><use href="#shortcut" y="52" width="20" height="20"/></svg><figcaption><span data-w="102">Regshot-x8...</span><span data-w="105">- collegame...</span></figcaption></figure>

        <figure class="c1 r5"><svg viewBox="0 0 72 72"><use href="#folderOpen" width="72" height="72"/><path fill="#0b6fc8" d="M26 20l18 6v36l-18-6z"/><path fill="none" stroke="#6fdcfa" stroke-width="1.300" d="M26 42l3 2 4-12 4 17 2-5 2 5h3"/><use href="#folderFront" width="72" height="72"/></svg><figcaption><span data-w="61">process</span><span data-w="64">monitor</span></figcaption></figure>
        <figure class="c2 r5"><svg viewBox="0 0 72 72"><use href="#folderFull" width="72" height="72"/></svg><figcaption><span data-w="83">ApateDNS</span></figcaption></figure>

        <figure class="c1 r6"><svg viewBox="0 0 72 72"><use href="#folderOpen" width="72" height="72"/><path fill="#e8cf35" d="M32 35h3v5h-3zM31 41h4v5h-4z"/><path fill="#b9b9b9" d="M29 38h3v8h-3z"/><use href="#folderFront" width="72" height="72"/></svg><figcaption><span data-w="61">process</span><span data-w="64">explorer</span></figcaption></figure>
        <figure class="c2 r6"><svg viewBox="0 0 72 72"><use href="#folderFull" width="72" height="72"/></svg><figcaption><span data-w="62">regshot</span></figcaption></figure>
      </div>

      <svg class="cursor" viewBox="0 0 18 28"><path fill="#fff" stroke="#000" d="M1 1v22l5-4.500 4 8.500 4-2-4-8h6.500z"/></svg>

      <footer class="taskbar">
        <svg class="start" viewBox="83 994 72 60"><path fill="#fff" d="M107 1015.300l10-1.400v9.600h-10zM118 1013.700l13-1.700v11.500h-13zM107 1024.500h10v9.600l-10-1.400zM118 1024.500h13v11.500l-13-1.700z"/></svg>
        <div class="search">
          <svg viewBox="0 0 24 24"><circle cx="15.500" cy="8.500" r="7.700" fill="none" stroke="#111" stroke-width="1.600"/><path stroke="#111" stroke-width="1.800" d="M.7 23.300l9.500-9.500"/></svg>
          <span data-w="325">Scrivi qui per eseguire la ricerca</span>
        </div>
        <svg class="task" viewBox="671 994 74 60"><ellipse cx="706.800" cy="1024" rx="9.800" ry="10" fill="none" stroke="#fff" stroke-width="3"/></svg>
        <svg class="task" viewBox="745 994 75 60"><path fill="none" stroke="#fff" stroke-width="1.300" d="M767.500 1018.500h15v10h-15zM767.500 1012v3h15v-3M767.500 1035v-3.500h15v3.500M789.500 1012v6M789.500 1023v12"/><path fill="#fff" d="M788 1019h3v3h-3z"/></svg>
        <svg class="task" viewBox="820 994 75 60"><path fill="#e0a008" d="M840 1012q0-1 1-1h12l2 2v5h-15z"/><path fill="#fdd253" d="M840 1016h12l4-3h16v22q0 1-1 1h-30q-1 0-1-1z"/><path fill="#3b94db" d="M845 1037v-10q0-2 2-2h17q2 0 2 2v10h-5v-7h-11v7z"/><path fill="#f5c033" d="M851 1031h10v5h-10z"/></svg>
        <svg class="task" viewBox="895 994 75 60"><path fill="none" stroke="#fff" stroke-width="1.500" d="M925 1016q-1-9 5-9t7 9M929 1016q-1-7 4-7.500 5 0 5.500 7.500"/><path fill="#fff" d="M913 1018h35v20q0 2-2 2h-31q-2 0-2-2z"/><path fill="#f25022" d="M923 1023h7v7h-7z"/><path fill="#7fba00" d="M931 1023h7v7h-7z"/><path fill="#00a4ef" d="M923 1031h7v6h-7z"/><path fill="#ffb900" d="M931 1031h7v6h-7z"/></svg>
        <svg class="task" viewBox="970 994 75 60"><path fill="#fff" d="M988 1017l18-9 18 9v20h-36z"/><path fill="#000" d="M989 1017h33l-13 6.500 8 9z"/></svg>
        <svg class="task active" viewBox="1045 994 75 60"><path fill="#050505" stroke="#b9c0c6" stroke-width="1.400" d="M1064.700 1010.700h31.500v25.600h-31.500z"/><path stroke="#c9d0d6" stroke-width="2" d="M1064 1011h33"/><path fill="#444" d="M1066 1012.500h29l-14 7-15 7z"/><path fill="none" stroke="#ddd" d="M1071 1015.500h-3v4h3M1073.500 1016v1M1073.500 1018.500v1M1075.500 1015l2.500 5M1079 1020h6"/></svg>
        <svg class="task" viewBox="1120 994 75 60"><use href="#chrome" x="1138.500" y="1007" width="34" height="34"/></svg>
        <svg class="tray" viewBox="1580 994 146 60"><g fill="none" stroke="#fff" stroke-width="1.500">
          <path d="M1591 1028l9-9 9 9"/><path d="M1632 1018.500h15v12.500H1629.500v-4M1647 1022.500h1.500v4h-1.500"/><path d="M1626 1015v4M1629.500 1015v4M1624.700 1019.500h6.300c0 6-6.300 6-6.300 0M1627.800 1024v7"/>
          <circle cx="1672" cy="1024" r="11.500"/><ellipse cx="1672" cy="1024" rx="5.500" ry="11.500"/><path d="M1661 1020h22M1661 1028h14"/><circle cx="1679" cy="1030.500" r="5" fill="#000"/><path d="M1675.500 1027l7 7"/>
          <path d="M1697.500 1020.500h3.500l5-5v18l-5-5h-3.500zM1709 1021q2 3 0 7M1712 1018.500q4 5.500 0 11.500M1715.500 1016q5 8 0 16.500"/></g><path fill="#fff" d="M1633 1020.500h12v8.500h-14v-3z"/></svg>
        <div class="datetime"><span data-w="42">18:01</span><span data-w="94">30/01/2022</span></div>
        <svg class="notify" viewBox="1845 994 67 60"><path fill="#fff" d="M1858 1012h24v19h-12v5l-6-5h-6z"/><path stroke="#000" stroke-width="1.300" d="M1863 1017.500h14M1863 1021.500h14M1863 1025.500h9"/><circle cx="1881.700" cy="1035.700" r="12" fill="#2b2b2b" stroke="#777"/><text x="1881.700" y="1042" text-anchor="middle">4</text></svg>
        <i class="peek"></i>
      </footer>
    </div>

    <div class="statusbar">
      <svg viewBox="1576 1054 253 26">
        <rect x="1580" y="1058" width="16" height="17" rx="2" fill="url(#blueBox)" stroke="#3c7fd0"/><circle cx="1588" cy="1065" r="5" fill="#cde6fb" stroke="#2d6fc4"/><path stroke="#fff" stroke-width="2" d="M1588 1065l-5 7"/>
        <circle cx="1610.500" cy="1066.500" r="9" fill="#b5d0f5" stroke="#7d97bf"/><path fill="#a7e8c4" d="M1610.500 1066.500l7-5q3 5 0 9z"/><path fill="#d7a8ec" d="M1610.500 1066.500l-6 6q-3-4-1-9z"/><circle cx="1610.500" cy="1066.500" r="2.500" fill="#fff" stroke="#668"/>
        <path fill="#3b7ac8" d="M1624 1058l5 4 6-2v12l-6-3-5 3z"/><rect x="1636" y="1060" width="6" height="10" rx="3" fill="#aaa"/><path fill="none" stroke="#999" stroke-width="1.500" d="M1634 1067q5 7 10 0M1639 1071v4"/>
        <path fill="#ccc" stroke="#aaa" d="M1652 1058.500h14v9h-14zM1648 1063.500h14v9h-14z"/><path stroke="#b5b5b5" stroke-width="2" d="M1650 1075h10"/>
        <path fill="#5aa4ee" stroke="#2b6cc4" d="M1671 1075q-1-4 2-7l7-6 5 5-6 6q-4 3-8 2z"/><path fill="#ddd" stroke="#888" d="M1681 1062l4-4 4 4-4 4z"/>
        <path fill="#2f7fe0" d="M1694 1062h9l2-2h7v14h-18z"/><path fill="url(#blueBox)" d="M1693 1064h19v11h-19z"/>
        <path fill="url(#blueBox)" stroke="#8db5e8" d="M1716.500 1059.500h18v14h-18z"/><path fill="#1c63d4" d="M1734 1060v13h-16z"/>
        <path fill="#2467d1" stroke="#86aee6" d="M1740.500 1062.500h14v12h-14z"/><path fill="#a8b8f1" stroke="#5570cc" d="M1746.500 1058.500h11v9h-11z"/><path fill="#eee" d="M1743 1070h8v3h-8z"/>
        <rect x="1764" y="1059" width="15" height="15" fill="#7b8fe9" stroke="#3b4cb8" stroke-width="3" stroke-dasharray="1.500 1.500"/><path fill="#6d83e4" d="M1765 1060h13v13h-13z"/><path fill="none" stroke="#fff" stroke-width="2" d="M1768.500 1062v5q0 4 3 4t3-4v-5"/>
        <circle cx="1794" cy="1066" r="8.500" fill="#78b9ef" stroke="#3b7bc4"/><path fill="#e8f3fd" d="M1788 1061q6-4 9 0l-5 4z"/><path fill="#5cb531" stroke="#2f7d16" d="M1795 1064l4-3 5 8-5 7h-5l3-6z"/>
        <rect x="1809" y="1058" width="17" height="17" rx="2" fill="#a9c0da" stroke="#5f7d9f"/><path fill="#e2ebf4" d="M1812 1061h11v11h-11z"/><path fill="#111" d="M1816 1062h3v4h2.500l-4 5-4-5h2.500z"/>
      </svg>
      <span data-w="88">Ctrl destro</span>
    </div>
  </section>
</main>
<script src="fit.js"></script>
</body>
</html>
```
FILE: styles.css
```css
* { box-sizing: border-box; }
body {
  margin: 0;
  width: 1920px;
  height: 1080px;
  overflow: hidden;
  display: flex;
  flex-direction: column;
  background: #000;
  font-family: "Open Sans", "Noto Sans", sans-serif;
}
svg { display: block; flex: none; }
p, figure { margin: 0; }
[data-w] { display: inline-block; white-space: pre; flex: none; }
.defs { position: absolute; width: 0; height: 0; }

/* GNOME top bar */
.topbar {
  height: 35px;
  flex: none;
  display: flex;
  align-items: center;
  background: linear-gradient(#5a574e, #3e3d38);
  color: #dfdbd2;
}
.top-text { font: 600 17.500px/34px "Open Sans", sans-serif; padding-bottom: 2px; text-shadow: 0 1px 1px #0006; }
.activities { margin-left: 12px; }
.top-app { width: 16px; height: 16px; margin-left: 20px; }
.appname { margin-left: 6px; }
.caret {
  flex: none;
  width: 10px;
  height: 6px;
  background: #cfcdc8;
  clip-path: polygon(0 0, 100% 0, 50% 100%);
  margin-left: 5px;
}
.clock { display: flex; align-items: center; margin-left: 683px; }
.dot { width: 7px; height: 7px; border-radius: 50%; background: #cfcdc8; margin-left: 4px; }
.indicators { width: 260px; height: 35px; margin-left: 328px; }
.lang { margin-left: 3px; margin-right: 4px; }
.sysicons { width: 92px; height: 35px; margin-left: 27px; }
.pct { font-size: 15px; margin-left: 3px; font-weight: 600; }

.shell { flex: 1; display: flex; min-height: 0; }

/* launcher */
.dock {
  width: 83px;
  flex: none;
  background: linear-gradient(90deg, #3b3934, #3d3b37 70%, #34332f);
}
.dock svg { width: 83px; height: 80px; }
.dock svg:first-child { margin-top: -1px; }
.dock .apps { height: 86px; }
.preview { font: 700 8px "Open Sans", sans-serif; fill: #fff; }

.window { flex: 1; display: flex; flex-direction: column; min-width: 0; }
.titlebar {
  height: 36px;
  flex: none;
  display: flex;
  align-items: center;
  padding-left: 658px;
  justify-content: space-between;
  background: #2d3235;
  border-bottom: 1px solid #0b0808;
  color: #f2f2f2;
  font-size: 17px;
}
.title { padding-bottom: 1px; }
.controls { width: 100px; height: 35px; }
.menubar {
  height: 26px;
  flex: none;
  display: flex;
  align-items: center;
  gap: 15px;
  padding: 0 0 1px 11px;
  background: #efebe7;
  border-bottom: 1px solid #d6d2cc;
  color: #111;
  font-size: 17px;
}

/* guest desktop */
.desktop {
  position: relative;
  flex: 1;
  min-height: 0;
  display: flex;
  flex-direction: column;
  background: #000;
}
.note {
  position: absolute;
  left: 304px;
  top: 114px;
  width: 1229px;
  height: 728px;
  padding: 8px;
  background: #404040;
}
.note-text {
  height: 712px;
  border: 1px solid #25cf25;
  padding: 7px 0 0 7px;
  color: #f38484;
  font: 24px/29px "Noto Sans", sans-serif;
  word-spacing: 2.500px;
}
.note-text p { height: 29px; }
.in1 { padding-left: 32px; }
.in2 { padding-left: 96px; }

.icons {
  position: relative;
  flex: 1;
  display: grid;
  grid-template-columns: repeat(16, 114px);
  grid-template-rows: repeat(6, 147px);
  padding-top: 7px;
}
.icons figure { display: flex; flex-direction: column; align-items: center; gap: 4px; }
.icons figure > svg { width: 72px; height: 72px; }
.c1 { grid-column: 1; }
.c2 { grid-column: 2; }
.c3 { grid-column: 3; }
.c13 { grid-column: 13; }
.c15 { grid-column: 15; }
.r1 { grid-row: 1; }
.r2 { grid-row: 2; }
.r3 { grid-row: 3; }
.r4 { grid-row: 4; }
.r5 { grid-row: 5; }
.r6 { grid-row: 6; }
figcaption {
  display: flex;
  flex-direction: column;
  align-items: center;
  color: #fff;
  font-size: 17px;
  line-height: 25px;
  text-shadow: 1px 2px 2px #000, 0 0 2px #000;
}
.cursor { position: absolute; left: 1035px; top: 280px; width: 18px; height: 28px; }

.taskbar { position: relative; height: 60px; flex: none; display: flex; }
.start { width: 72px; height: 60px; }
.search {
  width: 516px;
  flex: none;
  display: flex;
  align-items: center;
  gap: 18px;
  padding-left: 16px;
  background: #f2f2f2;
  border: 2px solid #bcbcbc;
  color: #333;
  font-size: 21.500px;
  line-height: 30px;
}
.search svg { width: 24px; height: 24px; margin-top: -2px; }
.search span { margin-top: 4px; }
.task { width: 75px; height: 60px; }
.search + .task { width: 74px; }
.active { background: linear-gradient(#76b9ed, #76b9ed) 6px 57px / 61px 3px no-repeat; }
.tray { width: 146px; height: 60px; margin-left: auto; }
.datetime {
  width: 119px;
  flex: none;
  display: flex;
  flex-direction: column;
  align-items: center;
  padding: 3px 5px 0 0;
  color: #fff;
  font-size: 17px;
  line-height: 28px;
}
.notify { width: 67px; height: 60px; }
.notify text { font: 600 17px "Open Sans", sans-serif; fill: #fff; }
.peek { width: 8px; border-left: 2px solid #666; }

.statusbar {
  height: 26px;
  flex: none;
  display: flex;
  align-items: center;
  justify-content: flex-end;
  gap: 2px;
  padding-right: 1px;
  background: #efebe7;
  color: #111;
  font-size: 17.500px;
}
.statusbar svg { width: 253px; height: 26px; }
```
FILE: fit.js
```js
// Spread each label over its set width by letter spacing.
document.querySelectorAll('[data-w]').forEach(function (el) {
  var extra = Number(el.dataset.w) - el.getBoundingClientRect().width;
  el.style.letterSpacing = (extra / el.textContent.length).toFixed(3) + 'px';
});
```
